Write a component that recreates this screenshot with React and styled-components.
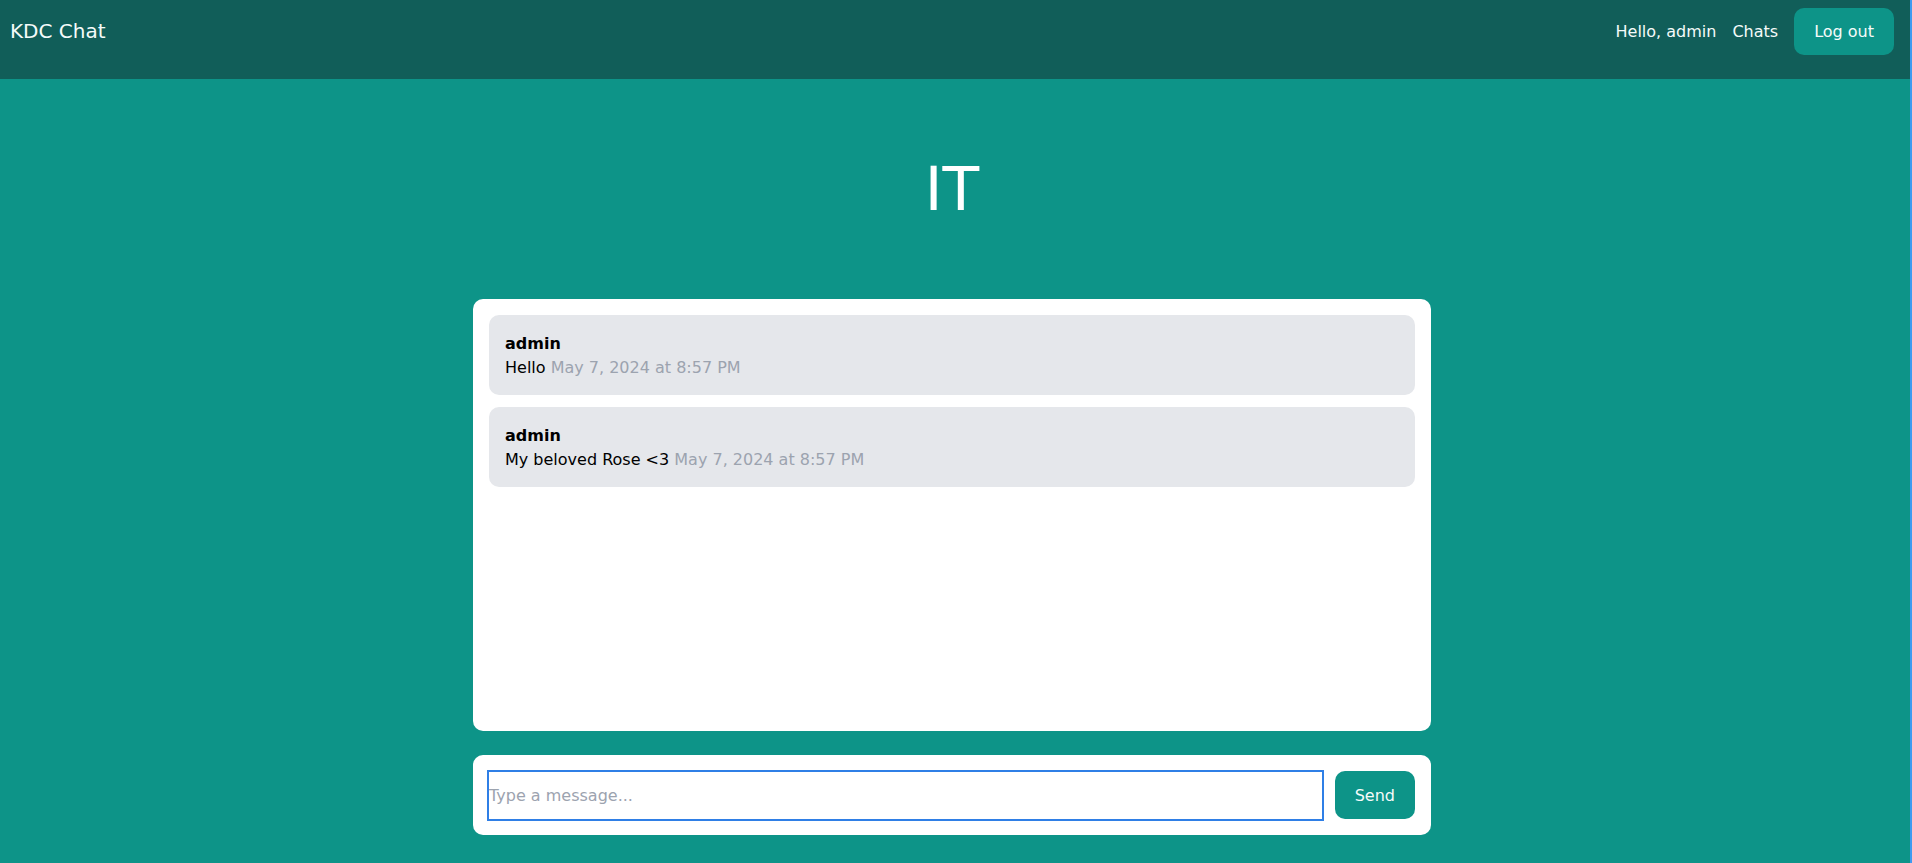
import React from "react";
import styled, { createGlobalStyle } from "styled-components";

const GlobalStyle = createGlobalStyle`
  html, body {
    margin: 0;
    padding: 0;
    background: #3d9bf0;
    font-family: "DejaVu Sans", "Liberation Sans", sans-serif;
  }
  * {
    box-sizing: border-box;
  }
`;

const Page = styled.div`
  margin-right: 2px;
  min-height: 100vh;
  background: #0d9488;
  color: #ffffff;
`;

const Header = styled.header`
  height: 79px;
  background: #115e59;
  display: flex;
  align-items: flex-start;
  justify-content: space-between;
  padding: 8px 16px 0 10px;
`;

const Brand = styled.div`
  font-size: 20px;
  line-height: 47px;
  color: #f5fbfa;
`;

const Nav = styled.nav`
  display: flex;
  align-items: center;
  gap: 16px;
  font-size: 16px;
  color: #f5fbfa;
`;

const NavLink = styled.span`
  line-height: 47px;
`;

const Button = styled.button`
  border: none;
  background: #0d9488;
  color: #f5fbfa;
  font-family: inherit;
  font-size: 16px;
  border-radius: 10px;
  height: ${(p) => p.$height || "48px"};
  padding: 0 ${(p) => p.$px || "20px"};
  cursor: pointer;
  flex-shrink: 0;
`;

const Main = styled.main`
  padding-right: 6px;
  display: flex;
  flex-direction: column;
  align-items: center;
`;

const Title = styled.h1`
  margin: 80px 0;
  font-size: 60px;
  line-height: 60px;
  font-weight: 400;
  color: #ffffff;
`;

const Panel = styled.div`
  width: 958px;
  background: #ffffff;
  border-radius: 10px;
  padding: 16px;
`;

const MessageList = styled(Panel)`
  height: 432px;
  display: flex;
  flex-direction: column;
  gap: 12px;
  overflow-y: auto;
`;

const Bubble = styled.div`
  background: #e5e7eb;
  border-radius: 10px;
  padding: 17px 16px 15px;
  color: #000000;
  font-size: 16px;
  line-height: 24px;
`;

const Author = styled.div`
  font-weight: 700;
`;

const Time = styled.span`
  color: #9ca3af;
`;

const Composer = styled(Panel)`
  margin-top: 24px;
  display: flex;
  align-items: center;
  gap: 13px;
`;

const Input = styled.input`
  flex: 1;
  height: 47px;
  border: none;
  padding: 0;
  font-family: inherit;
  font-size: 16px;
  color: #111827;
  outline: 2px solid #2f7fe6;
  &::placeholder {
    color: #9ca3af;
  }
`;

const messages = [
  { user: "admin", text: "Hello", time: "May 7, 2024 at 8:57 PM" },
  { user: "admin", text: "My beloved Rose <3", time: "May 7, 2024 at 8:57 PM" },
];

export default function App() {
  return (
    <>
      <GlobalStyle />
      <Page>
        <Header>
          <Brand>KDC Chat</Brand>
          <Nav>
            <NavLink>Hello, admin</NavLink>
            <NavLink>Chats</NavLink>
            <Button $height="47px" $px="20px">Log out</Button>
          </Nav>
        </Header>
        <Main>
          <Title>IT</Title>
          <MessageList>
            {messages.map((m, i) => (
              <Bubble key={i}>
                <Author>{m.user}</Author>
                <div>
                  {m.text} <Time>{m.time}</Time>
                </div>
              </Bubble>
            ))}
          </MessageList>
          <Composer>
            <Input placeholder="Type a message..." />
            <Button>Send</Button>
          </Composer>
        </Main>
      </Page>
    </>
  );
}
